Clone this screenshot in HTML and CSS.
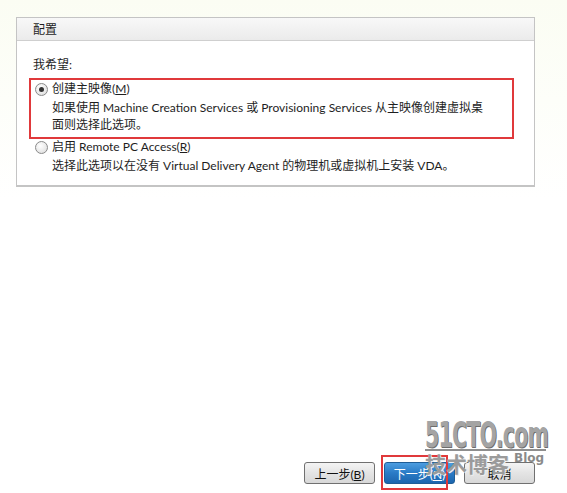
FILE: index.html
```html
<!DOCTYPE html>
<html>

<head>
    <meta charset="UTF-8">
    <title>配置</title>
    <link rel="stylesheet" href="styles.css">
</head>

<body>
    <div class="page">
        <div class="panel">
            <div class="panel-head">配置</div>
            <div class="panel-body">
                <div class="prompt">我希望:</div>
                <div class="option option-marked">
                    <span class="radio checked"></span>
                    <div class="option-text">
                        <div class="option-title">创建主映像(<u>M</u>)</div>
                        <div class="option-desc">如果使用 Machine Creation Services 或 Provisioning Services 从主映像创建虚拟桌<br>面则选择此选项。</div>
                    </div>
                </div>
                <div class="option option-next">
                    <span class="radio"></span>
                    <div class="option-text">
                        <div class="option-title">启用 Remote PC Access(<u>R</u>)</div>
                        <div class="option-desc">选择此选项以在没有 Virtual Delivery Agent 的物理机或虚拟机上安装 VDA。</div>
                    </div>
                </div>
            </div>
        </div>

        <div class="spacer"></div>

        <div class="footer">
            <button class="btn">上一步(<u>B</u>)</button>
            <span class="btn-wrap">
                <button class="btn btn-primary">下一步(<u>N</u>)</button>
                <span class="mark"></span>
            </span>
            <button class="btn">取消</button>
        </div>

        <div class="watermark">
            <div class="wm-site">51CTO.com</div>
            <div class="wm-rule"></div>
            <div class="wm-sub"><span class="wm-cn">技术博客</span><span class="wm-blog">Blog</span></div>
        </div>
    </div>
</body>

</html>
```

FILE: styles.css
```css
/* configuration wizard page */
html, body {
    margin: 0;
    padding: 0;
}

body {
    font-family: Lato, "Noto Sans CJK SC", sans-serif;
    font-size: 12px;
    color: #1e1e1e;
    background: linear-gradient(to bottom, #fbfdf3 0, #ffffff 200px);
}

.page {
    position: relative;
    height: 493px;
    display: flex;
    flex-direction: column;
    overflow: hidden;
}

.panel {
    margin: 17px 0 0 16px;
    width: 517px;
    border: 1px solid #c4c4c4;
    border-bottom-width: 2px;
    background: #fff;
}

.panel-head {
    height: 22px;
    line-height: 23px;
    padding-left: 16px;
    border-bottom: 1px solid #cfcfcf;
    background: linear-gradient(to bottom, #f8f8f8, #ebebeb);
}

.panel-body {
    padding: 15px 0 11px 13px;
}

.prompt {
    line-height: 17px;
    margin-bottom: 5px;
    padding-left: 3px;
}

.option {
    display: flex;
    align-items: flex-start;
    padding: 0 0 0 4px;
    width: 478px;
    line-height: 17px;
}

.option-marked {
    border: 2px solid #e0393b;
    margin-left: -1px;
    padding: 0 0 4px 3px;
}

.option-next {
    margin-top: -1px;
}

.radio {
    flex: none;
    width: 11px;
    height: 11px;
    margin: 3px 4px 0 1px;
    border: 1px solid #8a8a8a;
    border-radius: 50%;
    background: radial-gradient(circle at 40% 35%, #ffffff, #d9d9d9);
    position: relative;
}

.radio.checked::after {
    content: "";
    position: absolute;
    left: 3px;
    top: 3px;
    width: 5px;
    height: 5px;
    border-radius: 50%;
    background: #333;
}

.option-desc {
    white-space: nowrap;
    margin-top: 2px;
}

.spacer {
    flex: 1;
}

.footer {
    display: flex;
    justify-content: flex-end;
    gap: 9px;
    padding: 0 32px 9px 0;
}

.btn {
    width: 71px;
    height: 22px;
    padding: 0;
    font-family: inherit;
    font-size: 12px;
    color: #111;
    border: 1px solid #707070;
    border-radius: 3px;
    background: linear-gradient(to bottom, #f4f4f4, #e4e4e4 50%, #d8d8d8);
}

.btn-primary {
    color: #fff;
    border-color: #1f5d96;
    background: linear-gradient(to bottom, #4c9de0, #2a7bc6 50%, #1c65ad);
}

.btn-wrap {
    position: relative;
    display: inline-block;
}

.mark {
    position: absolute;
    left: -3px;
    top: -7px;
    width: 63px;
    height: 31px;
    border: 2px solid #e0393b;
}

.watermark {
    position: absolute;
    left: 425px;
    top: 418px;
    color: #9a9a9a;
    pointer-events: none;
}

.wm-site {
    font-family: "DejaVu Sans Condensed", "DejaVu Sans", sans-serif;
    font-weight: bold;
    font-size: 30px;
    line-height: 28px;
    letter-spacing: -1px;
    transform: scale(0.76, 1.2);
    transform-origin: left top;
    color: #a4a4a4;
    text-shadow: 1px 1px 0 #6d6d6d;
    white-space: nowrap;
    height: 31px;
}

.wm-rule {
    width: 121px;
    height: 2px;
    background: #8e8e8e;
}

.wm-sub {
    display: flex;
    align-items: flex-start;
    margin-top: 1px;
}

.wm-cn {
    font-family: "Noto Sans CJK SC", sans-serif;
    font-size: 21px;
    line-height: 23px;
    font-weight: bold;
    color: #9b9b9b;
    text-shadow: 1px 1px 0 #eee;
}

.wm-blog {
    font-family: "DejaVu Sans", sans-serif;
    font-weight: bold;
    font-size: 12px;
    line-height: 12px;
    color: #8a8a8a;
    margin-left: 5px;
}
```
